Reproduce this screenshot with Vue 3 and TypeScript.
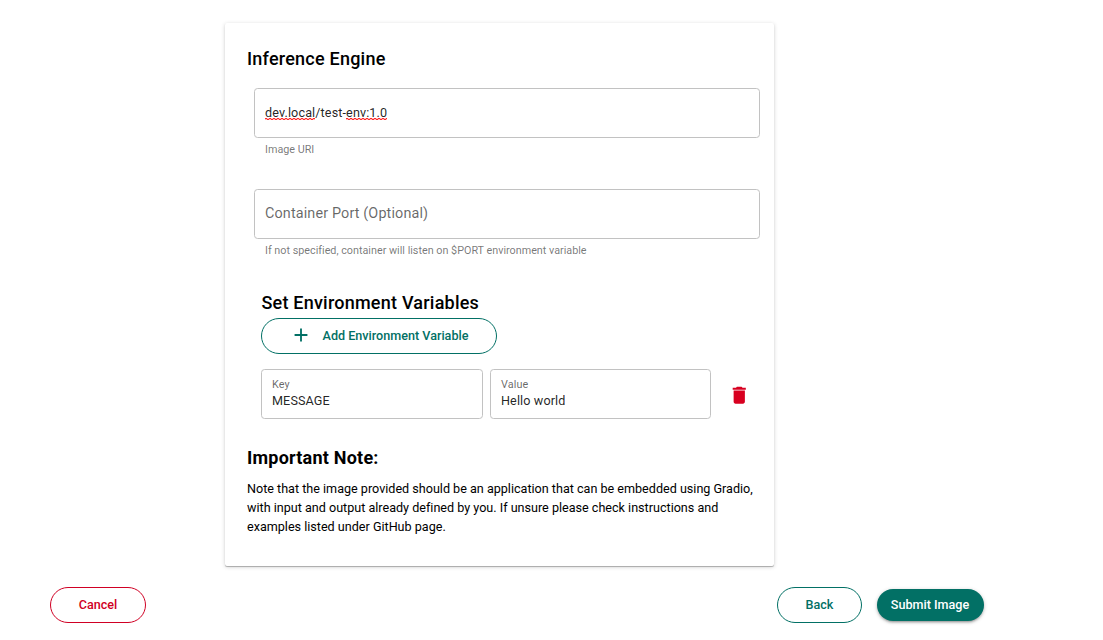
<script setup lang="ts">
import { ref } from 'vue'

interface EnvVariable {
  key: string
  value: string
}

const variables = ref<EnvVariable[]>([{ key: 'MESSAGE', value: 'Hello world' }])

function addVariable(): void {
  variables.value.push({ key: '', value: '' })
}

function removeVariable(index: number): void {
  variables.value.splice(index, 1)
}
</script>

<template>
  <main class="page">
    <section class="card">
      <h2 class="title">Inference Engine</h2>
      <div class="field uri">
        <span class="text"><span class="misspelt">dev.local</span>/test-<span class="misspelt">env:1.0</span></span>
      </div>
      <div class="hint">Image URI</div>
      <div class="field port">
        <span class="placeholder">Container Port (Optional)</span>
      </div>
      <div class="hint">If not specified, container will listen on $PORT environment variable</div>

      <h2 class="title env-title">Set Environment Variables</h2>
      <button class="btn outline add" type="button" @click="addVariable">
        <svg class="plus" viewBox="0 0 24 24"><path d="M19 13h-6v6h-2v-6H5v-2h6V5h2v6h6v2z" /></svg>
        <span>Add Environment Variable</span>
      </button>
      <div v-for="(item, index) in variables" :key="index" class="row">
        <div class="field stacked">
          <span class="label">Key</span>
          <span class="text">{{ item.key }}</span>
        </div>
        <div class="field stacked">
          <span class="label">Value</span>
          <span class="text">{{ item.value }}</span>
        </div>
        <button class="remove" type="button" aria-label="Remove" @click="removeVariable(index)">
          <svg class="trash" viewBox="0 0 24 24">
            <path d="M6 19c0 1.1.9 2 2 2h8c1.1 0 2-.9 2-2V7H6v12zM19 4h-3.5l-1-1h-5l-1 1H5v2h14V4z" />
          </svg>
        </button>
      </div>

      <h2 class="title note-title">Important Note:</h2>
      <p class="note">
        Note that the image provided should be an application that can be embedded using Gradio,
        with input and output already defined by you. If unsure please check instructions and
        examples listed under GitHub page.
      </p>
    </section>
    <footer class="actions">
      <button class="btn outline cancel" type="button">Cancel</button>
      <button class="btn outline back" type="button">Back</button>
      <button class="btn submit" type="button">Submit Image</button>
    </footer>
  </main>
</template>

<style>
body {
  background: #fff;
}
</style>

<style scoped>
.page {
  box-sizing: border-box;
  width: 1103px;
  height: 640px;
  padding-top: 23px;
  overflow: hidden;
  font-family: Roboto, 'Liberation Sans', sans-serif;
  font-size: 12.6px;
  color: #000;
}
.card {
  box-sizing: border-box;
  width: 549px;
  height: 543px;
  margin-left: 225px;
  padding: 22px 14px 0 22px;
  border-radius: 2px;
  background: #fff;
  box-shadow: 0 1px 4px rgba(0, 0, 0, 0.18), 0 1px 1px rgba(0, 0, 0, 0.14), 0 1px 0 rgba(0, 0, 0, 0.12);
}
.title {
  margin: 0;
  font-size: 18px;
  font-weight: 500;
  line-height: 28px;
  letter-spacing: 0.225px;
}
.field {
  box-sizing: border-box;
  display: flex;
  align-items: center;
  height: 50px;
  padding: 0 10px;
  border: 1px solid #c2c2c2;
  border-radius: 3.6px;
}
.uri {
  margin: 15px 0 0 7px;
}
.port {
  margin: 34px 0 0 7px;
  padding-bottom: 2px;
}
.text {
  line-height: 16px;
  letter-spacing: 0.118px;
  color: rgba(0, 0, 0, 0.87);
}
/* Two offset dashed rows form the spell-check squiggle. */
.misspelt {
  background-image:
    linear-gradient(90deg, #ff2a2a 50%, #ffb8b8 50%),
    linear-gradient(90deg, #ffb8b8 50%, #ff2a2a 50%);
  background-repeat: repeat-x;
  background-size: 4px 1px;
  background-position: 0 calc(100% - 1px), 0 100%;
}
.placeholder {
  font-size: 14.4px;
  letter-spacing: 0.135px;
  color: rgba(0, 0, 0, 0.6);
}
.hint {
  height: 11px;
  margin: 6px 0 0 18px;
  font-size: 10.8px;
  line-height: 11px;
  letter-spacing: -0.006px;
  color: rgba(0, 0, 0, 0.54);
}
.env-title {
  margin: 33px 0 0 14.4px;
}
.btn {
  box-sizing: border-box;
  display: flex;
  align-items: center;
  justify-content: center;
  height: 36px;
  padding: 0;
  border: 0;
  border-radius: 18px;
  background: #fff;
  font-family: inherit;
  font-size: 12.6px;
  font-weight: 500;
  line-height: 20px;
  color: #027065;
}
.outline {
  border: 1px solid currentColor;
}
.add {
  width: 236px;
  margin: 1px 0 0 14px;
}
.plus {
  width: 22px;
  height: 22px;
  margin: -2px 11px 0 0;
  fill: currentColor;
}
.row {
  display: flex;
  gap: 7px;
  margin: 15px 0 0 14px;
}
.stacked {
  flex-direction: column;
  align-items: flex-start;
  justify-content: flex-start;
  width: 222px;
  padding-top: 8px;
}
.stacked + .stacked {
  width: 221px;
}
.stacked .label {
  font-size: 10.8px;
  line-height: 13px;
  letter-spacing: 0.1px;
  color: rgba(0, 0, 0, 0.6);
}
.stacked .text {
  margin-top: 2px;
}
.remove {
  display: flex;
  align-items: center;
  margin: 2px 0 0 10px;
  padding: 0;
  border: 0;
  background: none;
  color: #d80020;
}
.trash {
  width: 22.5px;
  height: 22.5px;
  fill: currentColor;
}
.note-title {
  margin-top: 25px;
  font-weight: 700;
}
.note {
  width: 512px;
  margin: 7px 0 0;
  line-height: 19px;
  letter-spacing: -0.004px;
}
.actions {
  display: flex;
  align-items: center;
  margin: 21px 0 0 50px;
}
.cancel {
  width: 96px;
  color: #d00024;
}
.back {
  width: 85px;
  margin-left: 631px;
}
.submit {
  width: 107px;
  height: 32px;
  margin-left: 15px;
  padding-right: 1px;
  background: #027065;
  color: #fff;
  box-shadow: 0 1px 4px rgba(0, 0, 0, 0.2), 0 2px 2px rgba(0, 0, 0, 0.14), 0 3px 1px -2px rgba(0, 0, 0, 0.12);
}
</style>
